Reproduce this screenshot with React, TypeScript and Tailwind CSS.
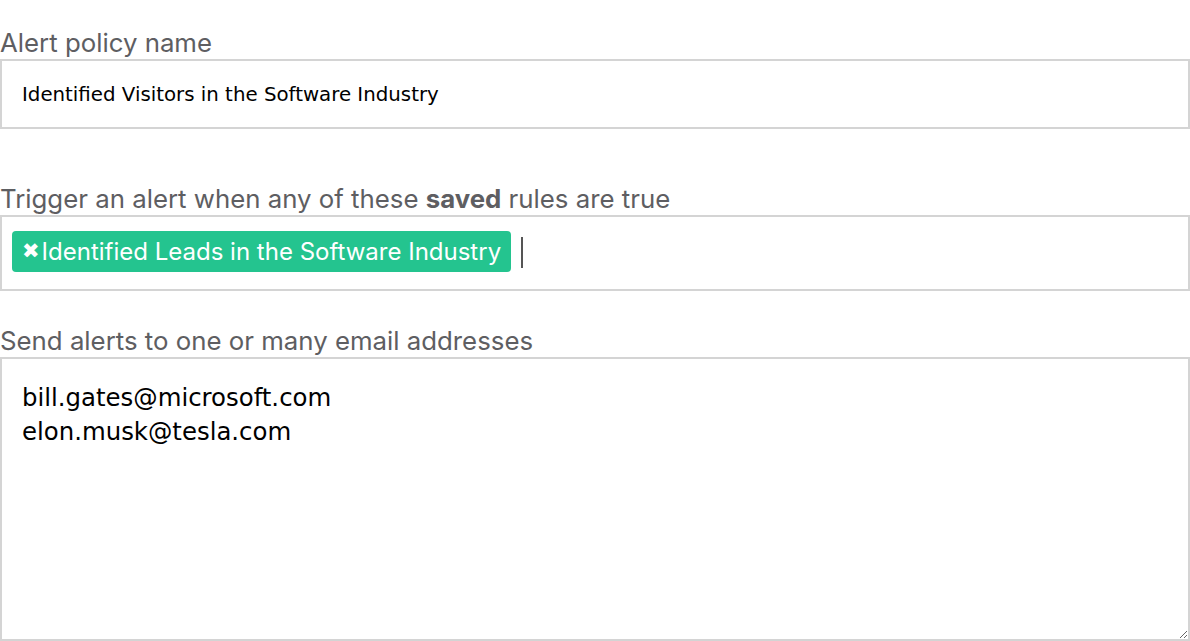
import { useState } from "react";

const labelFont = { fontFamily: "Inter, Lato, sans-serif" };
const valueFont = { fontFamily: "'DejaVu Sans', 'Liberation Sans', sans-serif" };

const FieldLabel = ({ children }: { children: React.ReactNode }) => (
  <label
    className="block text-[25.8px] leading-[29px] pb-[2px] text-[#5e5e62]"
    style={labelFont}
  >
    {children}
  </label>
);

const RuleTag = ({ name, onRemove }: { name: string; onRemove: () => void }) => (
  <span
    className="flex items-center h-[41px] pl-[10px] pr-[10px] rounded-[4px] bg-[#24c48f] text-white text-[24px]"
    style={labelFont}
  >
    <button
      className="mr-[2px] text-[21px] font-bold leading-none cursor-pointer"
      style={valueFont}
      onClick={onRemove}
    >
      ✖
    </button>
    {name}
  </span>
);

export default function App() {
  const [policyName, setPolicyName] = useState(
    "Identified Visitors in the Software Industry"
  );
  const [rules, setRules] = useState(["Identified Leads in the Software Industry"]);
  const [emails, setEmails] = useState(
    "bill.gates@microsoft.com\nelon.musk@tesla.com"
  );

  return (
    <div className="w-[1190px] h-[641px] overflow-hidden bg-white pt-[28px]">
      <FieldLabel>Alert policy name</FieldLabel>
      <input
        className="block w-full h-[70px] border-2 border-[#d4d4d4] px-[20px] text-[19.8px] text-black outline-none"
        style={valueFont}
        value={policyName}
        onChange={(e) => setPolicyName(e.target.value)}
      />

      <div className="mt-[55px]">
        <FieldLabel>
          Trigger an alert when any of these <b className="font-bold">saved</b> rules are
          true
        </FieldLabel>
      </div>
      <div className="flex items-start h-[76px] border-2 border-[#d4d4d4] px-[10px] pt-[14px]">
        {rules.map((r, i) => (
          <RuleTag
            key={i}
            name={r}
            onRemove={() => setRules(rules.filter((_, j) => j !== i))}
          />
        ))}
        <span className="ml-[10px] mt-[6px] w-[2px] h-[31px] bg-[#555]" />
      </div>

      <div className="mt-[35px]">
        <FieldLabel>Send alerts to one or many email addresses</FieldLabel>
      </div>
      <textarea
        className="block w-full h-[284px] border-2 border-[#d4d4d4] px-[20px] pt-[22px] text-[24.4px] leading-[34px] text-black outline-none"
        style={valueFont}
        value={emails}
        onChange={(e) => setEmails(e.target.value)}
      />
    </div>
  );
}
